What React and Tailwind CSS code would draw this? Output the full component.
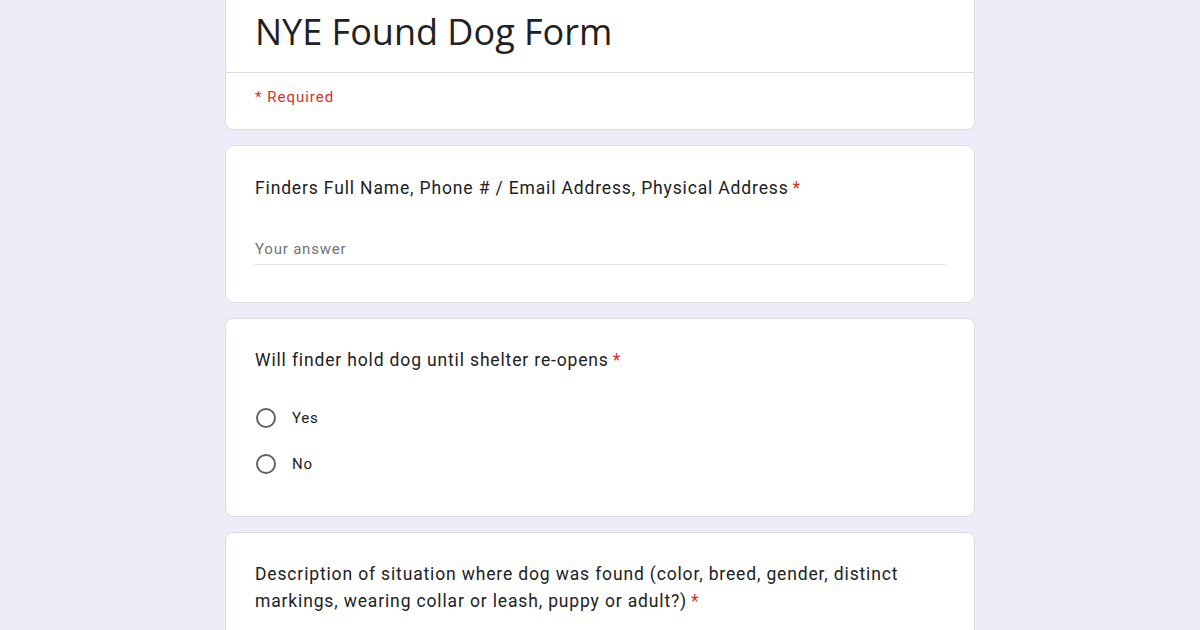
import React from "react";

function Req() {
  return <span className="text-[#d93025] ml-1">*</span>;
}

function Radio({ label }) {
  return (
    <div className="flex items-center h-[46px]">
      <span className="w-5 h-5 rounded-full border-2 border-[#5f6368] ml-px mr-4 box-border" />
      <span className="text-[15px] text-[#202124] tracking-[0.8px]">{label}</span>
    </div>
  );
}

export default function App() {
  return (
    <div
      className="min-h-screen bg-[#f0ebf8] overflow-hidden"
      style={{ fontFamily: "Roboto, 'Noto Sans', sans-serif" }}
    >
      <div className="w-[750px] mx-auto flex flex-col gap-[15px]">
        <div className="bg-white border border-t-0 border-[#dadce0] rounded-b-lg">
          <div className="px-[29px] pt-[8px] pb-[16px] border-b border-[#dadce0]">
            <h1
              className="text-[36px] leading-[48px] text-[#202124]"
              style={{ fontFamily: "'Open Sans', sans-serif" }}
            >
              NYE Found Dog Form
            </h1>
          </div>
          <div className="px-[29px] pt-[14px] pb-[22px] text-[15px] leading-[20px] tracking-[1px] text-[#d93025]">
            * Required
          </div>
        </div>

        <div className="bg-white border border-[#dadce0] rounded-lg px-[29px] pt-[29px] pb-[37px]">
          <div className="text-[17.5px] leading-[26px] text-[#202124] tracking-[0.85px]">
            Finders Full Name, Phone # / Email Address, Physical Address
            <Req />
          </div>
          <div className="mt-[38px] w-[690px] border-b border-[#e0e0e0] pb-[5px] text-[15px] leading-[20px] text-[#70757a] tracking-[0.8px]">
            Your answer
          </div>
        </div>

        <div className="bg-white border border-[#dadce0] rounded-lg px-[29px] pt-[28px] pb-[29px]">
          <div className="text-[17.5px] leading-[26px] text-[#202124] tracking-[0.85px]">
            Will finder hold dog until shelter re-opens
            <Req />
          </div>
          <div className="mt-[22px]">
            <Radio label="Yes" />
            <Radio label="No" />
          </div>
        </div>

        <div className="bg-white border border-[#dadce0] rounded-lg px-[29px] pt-[28px] pb-[60px]">
          <div className="text-[17.5px] leading-[27px] text-[#202124] tracking-[0.85px] w-[690px]">
            Description of situation where dog was found (color, breed, gender, distinct
            markings, wearing collar or leash, puppy or adult?)
            <Req />
          </div>
        </div>
      </div>
    </div>
  );
}
